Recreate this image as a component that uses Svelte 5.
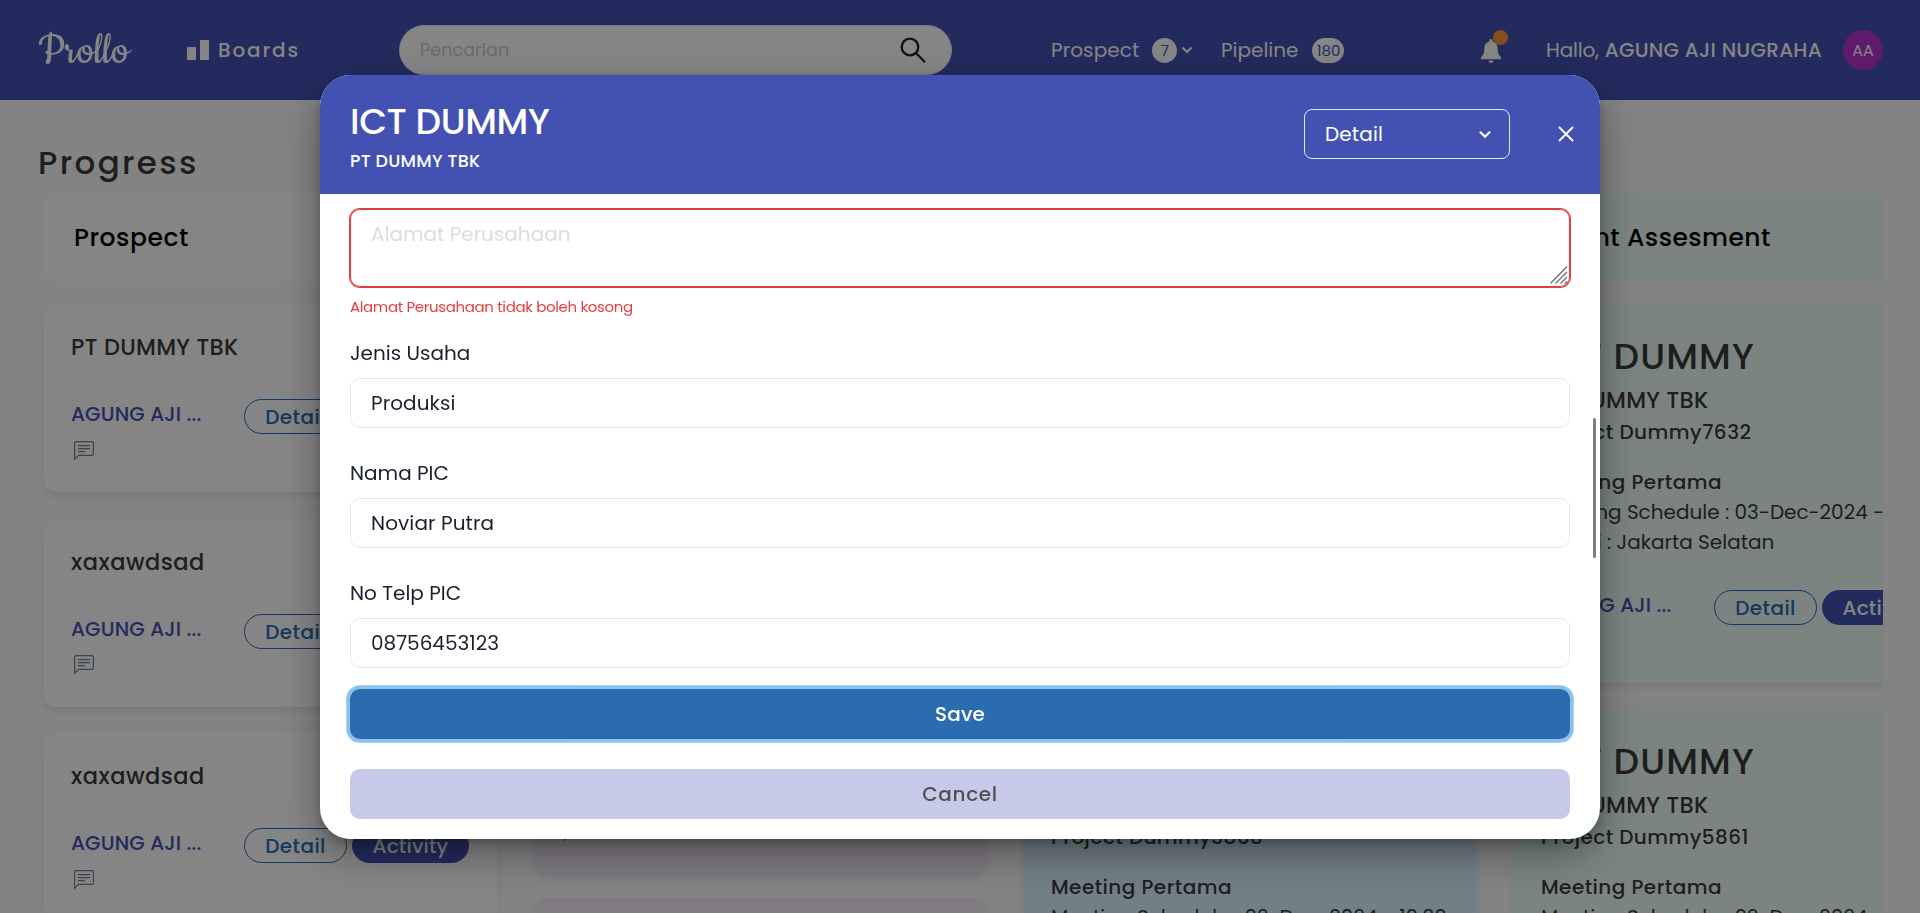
<script>
  const context = document.createElement('canvas').getContext('2d');

  // Tracks a label out (or in) so that its glyphs span the given width.
  function fit(node, width) {
    const style = getComputedStyle(node);
    const text = node.textContent;
    context.font = `${style.fontWeight} ${style.fontSize} ${style.fontFamily}`;
    const box = context.measureText(text);
    const ink = box.actualBoundingBoxRight + box.actualBoundingBoxLeft;
    const spacing = (width - ink) / (text.length - 1);
    if (Math.abs(spacing) > 0.06) node.style.letterSpacing = `${spacing}px`;
  }

  const leads = [
    { name: 'PT DUMMY TBK', width: 166 },
    { name: 'xaxawdsad', width: 132 },
    { name: 'xaxawdsad', width: 132 }
  ];

  const surveys = [
    { project: 'Project Dummy3868', width: 210, schedule: '02-Dec-2024 - 10:30' },
    { project: 'Project Dummy3868', width: 210, schedule: '02-Dec-2024 - 10:30' }
  ];

  const assessments = [
    { project: 'Project Dummy7632', width: 208.5, schedule: '03-Dec-2024 - 10:00' },
    { project: 'Project Dummy5861', width: 205.5, schedule: '02-Dec-2024 - 10:30' }
  ];

  const fields = [
    { label: 'Jenis Usaha', lw: 119, value: 'Produksi', vw: 82.5 },
    { label: 'Nama PIC', lw: 97.5, value: 'Noviar Putra', vw: 120.5 },
    { label: 'No Telp PIC', lw: 110, value: '08756453123', vw: 126.5 }
  ];
</script>

{#snippet chevron()}
  <svg class="chevron" viewBox="0 0 12 8"><path d="M1.5 1.5 6 6l4.5-4.5" /></svg>
{/snippet}

{#snippet comment()}
  <svg class="comment" viewBox="0 0 20 19">
    <path d="M.6 18.2V2.2Q.6.6 2.2.6h15.6q1.6 0 1.6 1.6v10.6q0 1.6-1.6 1.6H4.6z" />
    <path d="M4 4.6h12M4 7.6h12M4 10.6h7" />
  </svg>
{/snippet}

{#snippet owner()}
  <div class="actions">
    <div class="owner"><span use:fit={129.5}>AGUNG AJI ...</span></div>
    <div class="pill outline"><span use:fit={58}>Detail</span></div>
    <div class="pill solid"><span use:fit={76}>Activity</span></div>
  </div>
{/snippet}

{#snippet projectCard(item)}
  <article class="card tall">
    <h2><span use:fit={210}>ICT DUMMY</span></h2>
    <h3><span use:fit={166}>PT DUMMY TBK</span></h3>
    <p class="strong"><span use:fit={item.width}>{item.project}</span></p>
    <p class="strong meeting"><span use:fit={179}>Meeting Pertama</span></p>
    <p><span use:fit={394}>Meeting Schedule : {item.schedule}</span></p>
    <p><span use:fit={231}>Lokasi : Jakarta Selatan</span></p>
    {@render owner()}
  </article>
{/snippet}

<div class="page">
  <header class="topbar">
    <div class="logo">Prollo</div>
    <nav class="boards">
      <svg viewBox="0 0 22 20"><rect y="7" width="9" height="13" rx="1" /><rect x="13" width="9" height="20" rx="1" /></svg>
      <span use:fit={78.5}>Boards</span>
    </nav>
    <div class="search">
      <span use:fit={87}>Pencarian</span>
      <svg viewBox="0 0 26 26"><circle cx="10" cy="10" r="8.3" /><path d="m16 16 8.3 8.5" /></svg>
    </div>
    <div class="stat prospect">
      <span class="name" use:fit={87}>Prospect</span>
      <b class="count">7</b>
      {@render chevron()}
    </div>
    <div class="stat">
      <span class="name" use:fit={76}>Pipeline</span>
      <b class="count wide">180</b>
    </div>
    <div class="bell">
      <svg viewBox="0 0 20 24"><path d="M10 0a1.7 1.7 0 0 1 1.7 1.7v.7c3.3.8 5 3.5 5 6.8 0 5 1.2 7 3.3 9v2H0v-2c2.1-2 3.3-4 3.3-9 0-3.3 1.7-6 5-6.8v-.7A1.7 1.7 0 0 1 10 0zM7.5 21.6h5a2.5 2.4 0 0 1-5 0z" /></svg>
      <i></i>
    </div>
    <div class="hello"><span use:fit={52}>Hallo,</span><strong use:fit={217}>AGUNG AJI NUGRAHA</strong></div>
    <div class="avatar">AA</div>
  </header>

  <main>
    <h1><span use:fit={155}>Progress</span></h1>
    <div class="board">
      <section>
        <div class="column-title"><span use:fit={113}>Prospect</span></div>
        {#each leads as lead}
          <article class="card short">
            <h3><span use:fit={lead.width}>{lead.name}</span></h3>
            {@render owner()}
            {@render comment()}
          </article>
        {/each}
      </section>
      <section class="violet">
        <div class="column-title"><span>Pipeline</span></div>
        <article class="card long">{@render comment()}</article>
        <article class="card long"></article>
      </section>
      <section class="sky">
        <div class="column-title"><span>Survey</span></div>
        {#each surveys as item}{@render projectCard(item)}{/each}
      </section>
      <section class="mint">
        <div class="column-title"><span use:fit={226}>Client Assesment</span></div>
        {#each assessments as item}{@render projectCard(item)}{/each}
      </section>
    </div>
  </main>
</div>

<div class="overlay">
  <div class="modal">
    <header>
      <div class="heading">
        <div class="title"><span use:fit={198}>ICT DUMMY</span></div>
        <div class="subtitle"><span use:fit={129}>PT DUMMY TBK</span></div>
      </div>
      <div class="select"><span use:fit={56}>Detail</span>{@render chevron()}</div>
      <svg class="close" viewBox="0 0 16 16"><path d="m1 1 14 14M15 1 1 15" /></svg>
    </header>
    <div class="body">
      <div class="textarea">
        <span use:fit={198}>Alamat Perusahaan</span>
        <svg class="grip" viewBox="0 0 18 18"><path d="M.5 17.5 17 .5M5.5 17.5 17 6M10.5 17.5 17 11M15 17.5l2-2" /></svg>
      </div>
      <div class="error"><span use:fit={282}>Alamat Perusahaan tidak boleh kosong</span></div>
      <div class="fields">
        {#each fields as field}
          <div class="field">
            <div class="label"><span use:fit={field.lw}>{field.label}</span></div>
            <div class="input"><span use:fit={field.vw}>{field.value}</span></div>
          </div>
        {/each}
      </div>
      <div class="button save">Save</div>
      <div class="button cancel"><span use:fit={73.5}>Cancel</span></div>
      <div class="scrollbar"></div>
    </div>
  </div>
</div>

<style>
  :global(body) {
    margin: 0;
    overflow: hidden;
    font-family: Poppins, Inter, 'Open Sans', sans-serif;
  }
  :global(#app *) {
    box-sizing: border-box;
  }
  span,
  strong {
    white-space: nowrap;
  }
  .page {
    height: 913px;
    overflow: hidden;
    background: #fbfbfb;
    color: #3b3b3b;
  }
  .topbar {
    height: 100px;
    padding-left: 38px;
    display: grid;
    grid-template-columns: 149px 212px 553px 99px 170px 260px 65px 297px 40px;
    align-items: center;
    background: #4351b3;
    color: #fff;
    font-size: 20px;
  }
  .logo {
    padding-top: 3px;
    font-family: Cookie, 'Liberation Serif', cursive;
    font-size: 48.5px;
    line-height: 60px;
  }
  .boards {
    display: flex;
    align-items: center;
    gap: 9px;
    font-weight: 500;
  }
  .boards svg {
    width: 22px;
    height: 20px;
    fill: #fff;
  }
  .search {
    height: 50px;
    border: 1px solid #e2e8f0;
    border-radius: 25px;
    background: #fff;
    display: flex;
    align-items: center;
    justify-content: space-between;
    padding: 0 25px 0 20px;
    width: 553px;
    color: #c6cdd6;
    font-size: 17.5px;
  }
  .search svg {
    width: 26px;
    height: 26px;
    margin-bottom: 1px;
    fill: none;
    stroke: #1a202c;
    stroke-width: 2.3;
    stroke-linecap: round;
  }
  .stat,
  .prospect {
    display: flex;
    align-items: center;
    grid-column: 6;
  }
  .prospect {
    grid-column: 4 / 6;
    padding-left: 99px;
  }
  .name {
    flex: none;
  }
  .count {
    width: 25px;
    height: 25px;
    margin-left: 13px;
    border-radius: 13px;
    background: #fff;
    color: #4351b3;
    font-size: 15px;
    font-weight: 400;
    line-height: 26px;
    text-align: center;
  }
  .count.wide {
    width: 32px;
    margin-left: 14px;
  }
  .chevron {
    width: 12px;
    height: 8px;
    margin-left: 4px;
    fill: none;
    stroke: #fff;
    stroke-width: 2;
  }
  .bell {
    position: relative;
    height: 40px;
  }
  .bell svg {
    width: 20px;
    height: 24px;
    margin-top: 9px;
    fill: #fff;
  }
  .bell i {
    position: absolute;
    left: 12px;
    top: 0;
    width: 15px;
    height: 15px;
    border-radius: 50%;
    background: #ff9838;
  }
  .hello {
    display: flex;
    gap: 6px;
  }
  .hello strong {
    font-weight: 500;
  }
  .avatar {
    width: 40px;
    height: 40px;
    border-radius: 50%;
    background: #b732ce;
    font-size: 16px;
    line-height: 41px;
    text-align: center;
  }
  main {
    padding: 39px 0 0 37px;
  }
  h1,
  h2,
  h3,
  p {
    margin: 0;
    font-weight: 500;
  }
  h1 {
    padding-left: 1px;
    font-size: 32.5px;
    line-height: 48px;
    font-weight: 500;
  }
  .board {
    display: grid;
    grid-template-columns: repeat(4, 453px);
    gap: 37px;
    width: 1852px;
    margin-left: -6px;
    padding: 6px 0 0 13px;
    overflow: hidden;
  }
  .column-title {
    height: 90px;
    margin-bottom: 20px;
    padding-left: 30px;
    border-radius: 12px;
    background: #fff;
    color: #000;
    font-size: 25px;
    font-weight: 500;
    line-height: 89px;
  }
  .card {
    margin-bottom: 25.3px;
    padding-left: 27px;
    border-radius: 12px;
    background: #fff;
    box-shadow:
      0 4px 6px -1px rgba(0, 0, 0, 0.06),
      0 4px 12px rgba(0, 0, 0, 0.04);
  }
  .short {
    height: 189.4px;
    padding-top: 27px;
  }
  .short .actions {
    margin-top: 35px;
  }
  .long {
    height: 570px;
    margin-bottom: 25px;
    padding-top: 512px;
  }
  .tall {
    height: 380px;
    margin-bottom: 25px;
    padding-top: 26.5px;
  }
  .violet .column-title,
  .violet .card {
    background: #f4ebf8;
  }
  .sky .column-title,
  .sky .card {
    background: #daf4ff;
  }
  .mint .column-title,
  .mint .card {
    background: #ebfef6;
  }
  h2 {
    padding-left: 1px;
    font-size: 36px;
    line-height: 54px;
  }
  h3 {
    font-size: 22.5px;
    line-height: 34px;
  }
  .tall h3 {
    height: 33px;
    line-height: 33px;
  }
  p {
    font-size: 20px;
    line-height: 30px;
    font-weight: 400;
    white-space: nowrap;
  }
  .strong {
    font-weight: 500;
  }
  .meeting {
    margin-top: 20px;
  }
  .tall .actions {
    margin-top: 33px;
  }
  .actions {
    display: flex;
    gap: 5px;
    height: 35px;
    font-size: 20px;
    font-weight: 500;
    line-height: 34px;
  }
  .owner {
    width: 168px;
    line-height: 30px;
    color: #4351b3;
  }
  .pill {
    flex: none;
    width: 103px;
    border: 1px solid #2b6cb0;
    border-radius: 18px;
    text-align: center;
    color: #2b6cb0;
  }
  .solid {
    width: 117px;
    border-color: #4351b3;
    background: #4351b3;
    color: #fff;
  }
  .comment {
    display: block;
    width: 20px;
    height: 19px;
    margin: 6.5px 0 0 3px;
    fill: none;
    stroke: #718096;
    stroke-width: 1.2;
  }
  .overlay {
    position: fixed;
    inset: 0;
    display: flex;
    justify-content: center;
    align-items: flex-start;
    padding-top: 75px;
    background: rgba(0, 0, 0, 0.48);
  }
  .modal {
    width: 1280px;
    height: 764px;
    border-radius: 31px;
    overflow: hidden;
    background: #fff;
    color: #1a202c;
    font-size: 20px;
    box-shadow:
      0 5px 10px rgba(0, 0, 0, 0.18),
      0 15px 40px rgba(0, 0, 0, 0.36);
  }
  .modal header {
    height: 119px;
    padding: 0 26px 1px 30px;
    display: flex;
    align-items: center;
    background: #4351b3;
    color: #fff;
  }
  .heading {
    flex: 1;
    padding-top: 3px;
    font-weight: 500;
  }
  .title {
    font-size: 36px;
    line-height: 50px;
  }
  .subtitle {
    font-size: 17.5px;
    line-height: 28px;
  }
  .select {
    display: flex;
    align-items: center;
    justify-content: space-between;
    width: 206px;
    height: 50px;
    padding: 0 17px 0 20px;
    border: 1px solid #e2e8f0;
    border-radius: 8px;
  }
  .select .chevron {
    width: 14px;
    height: 9px;
  }
  .close {
    width: 16px;
    height: 16px;
    margin-left: 48px;
    fill: none;
    stroke: #fff;
    stroke-width: 2;
  }
  .body {
    position: relative;
    padding: 15px 30px 20px;
  }
  .textarea {
    position: relative;
    height: 78px;
    padding: 10px 20px;
    border: 1px solid #e53e3e;
    border-radius: 10px;
    box-shadow: 0 0 0 1px #e53e3e;
    color: #dcdcdc;
    line-height: 29px;
  }
  .grip {
    position: absolute;
    right: 1px;
    bottom: 2px;
    width: 18px;
    height: 18px;
    fill: none;
    stroke: #6b6b6b;
    stroke-width: 1.3;
  }
  .error {
    margin-top: 8px;
    color: #e53e3e;
    font-size: 15px;
    line-height: 24px;
  }
  .fields {
    display: grid;
    gap: 30px;
    padding: 19px 0 21px;
  }
  .label {
    margin-bottom: 10px;
    line-height: 30px;
  }
  .input {
    height: 50px;
    padding-left: 20px;
    border: 1px solid #e2e8f0;
    border-radius: 10px;
    line-height: 49px;
  }
  .button {
    height: 50px;
    border-radius: 10px;
    font-weight: 500;
    line-height: 51px;
    text-align: center;
  }
  .save {
    margin-bottom: 30px;
    background: #2b6cb0;
    box-shadow: 0 0 0 3.75px rgba(66, 153, 225, 0.6);
    color: #fff;
    font-weight: 500;
    letter-spacing: 0.1px;
  }
  .cancel {
    background: #c7c9e8;
    color: #505050;
  }
  .scrollbar {
    position: absolute;
    top: 224px;
    right: 4px;
    width: 3px;
    height: 140px;
    border-radius: 2px;
    background: #7f7f7f;
  }
</style>
